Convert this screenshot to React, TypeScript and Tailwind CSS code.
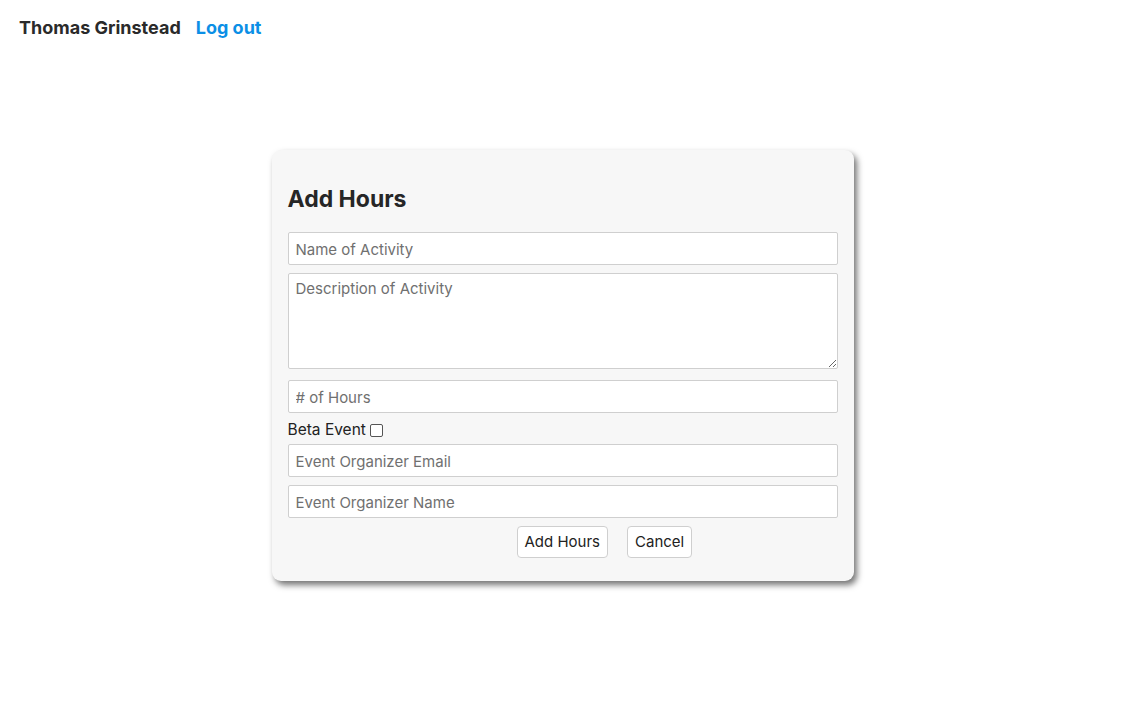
import React from "react";

export default function App() {
  const inputCls =
    "block w-[550px] h-[33px] px-[7px] pt-[2px] border border-[#cfcfcf] rounded-[2px] bg-white text-[15px] text-[#222] placeholder:text-[#707070] outline-none";
  return (
    <div className="w-[1123px] h-[724px] bg-white text-[#222]" style={{ fontFamily: "Inter, 'Noto Sans', sans-serif" }}>
      <div className="flex items-center h-[55px] pl-[19px] pb-[1px]">
        <span className="text-[18px] font-bold text-[#2a2a2a]">Thomas Grinstead</span>
        <a className="ml-[15px] text-[18px] font-bold text-[#0b8fe6]" href="#">Log out</a>
      </div>
      <div className="flex justify-center pt-[95px] pl-[2px]">
        <div className="w-[582px] rounded-[9px] bg-[#f7f7f7] px-[16px] pt-[34px] pb-[23px] shadow-[3px_4px_6px_rgba(0,0,0,0.55)]">
          <h2 className="text-[23px] font-bold text-[#262626] leading-[30px]">Add Hours</h2>
          <div className="mt-[18px] flex flex-col">
            <input className={inputCls} placeholder="Name of Activity" />
            <textarea
              className="mt-[8px] block w-[550px] h-[96px] px-[7px] pt-[4px] pb-[6px] border border-[#cfcfcf] rounded-[2px] bg-white text-[15px] text-[#222] placeholder:text-[#707070] outline-none resize-y"
              placeholder="Description of Activity"
            />
            <input className={`${inputCls} mt-[11px]`} placeholder="# of Hours" />
            <label className="flex items-center h-[31px] pt-[3px] text-[15.5px] text-[#222]">
              Beta Event
              <input type="checkbox" className="ml-[4px] w-[13px] h-[13px] appearance-none border border-[#555] rounded-[2px] bg-white" />
            </label>
            <input className={inputCls} placeholder="Event Organizer Email" />
            <input className={`${inputCls} mt-[8px]`} placeholder="Event Organizer Name" />
            <div className="mt-[8px] flex pl-[229px] gap-[19px]">
              <button className="h-[32px] px-[7px] pt-[1px] border border-[#cfcfcf] rounded-[4px] bg-white text-[15px] text-[#222]">Add Hours</button>
              <button className="h-[32px] px-[7px] pt-[1px] border border-[#cfcfcf] rounded-[4px] bg-white text-[15px] text-[#222]">Cancel</button>
            </div>
          </div>
        </div>
      </div>
    </div>
  );
}
